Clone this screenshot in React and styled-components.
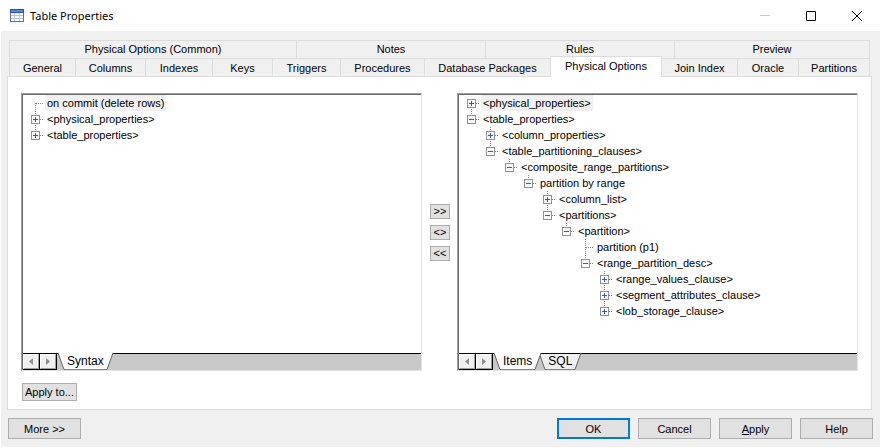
import React, { useState } from 'react';
import styled, { createGlobalStyle } from 'styled-components';

const theme = {
  face: '#f0f0f0',
  line: '#dcdcdc',
  button: '#e1e1e1',
  buttonBorder: '#adadad',
  accent: '#0078d7',
  font: '"Liberation Sans", Arial, sans-serif',
};

const topTabs = ['Physical Options (Common)', 'Notes', 'Rules', 'Preview'];

const bottomTabs = [
  'General', 'Columns', 'Indexes', 'Keys', 'Triggers', 'Procedures',
  'Database Packages', 'Physical Options', 'Join Index', 'Oracle', 'Partitions',
];

const syntaxTree = [
  { label: 'on commit (delete rows)' },
  { label: '<physical_properties>', open: false },
  { label: '<table_properties>', open: false },
];

const itemsTree = [
  { label: '<physical_properties>', open: false },
  { label: '<table_properties>', open: true, children: [
    { label: '<column_properties>', open: false },
    { label: '<table_partitioning_clauses>', open: true, children: [
      { label: '<composite_range_partitions>', open: true, children: [
        { label: 'partition by range', open: true, children: [
          { label: '<column_list>', open: false },
          { label: '<partitions>', open: true, children: [
            { label: '<partition>', open: true, children: [
              { label: 'partition (p1)' },
              { label: '<range_partition_desc>', open: true, children: [
                { label: '<range_values_clause>', open: false },
                { label: '<segment_attributes_clause>', open: false },
                { label: '<lob_storage_clause>', open: false },
              ] },
            ] },
          ] },
        ] },
      ] },
    ] },
  ] },
];

const TreeItem = ({ node, root, first, last }) => {
  const [open, setOpen] = useState(node.open);
  const expandable = node.open !== undefined;

  return (
    <li role='treeitem' aria-expanded={expandable ? open : undefined}>
      <Row>
        <Lines width='22' height='16' viewBox='0 0 22 16' aria-hidden='true'>
          {!(root && first) && <path d='M12.5 0V8' />}
          {!last && <path d='M12.5 8V16' />}
          <path d='M13 8.5H21' />
        </Lines>
        {expandable && (
          <Toggle
            type='button'
            aria-label={`Toggle ${node.label}`}
            onClick={() => setOpen(!open)}
          >
            <svg width='9' height='9' viewBox='0 0 9 9' aria-hidden='true'>
              <rect x='0.5' y='0.5' width='8' height='8' fill='#f8f8f8' stroke='#919191' />
              <path d='M2 4.5H7' stroke='#3c5aa0' />
              {!open && <path d='M4.5 2V7' stroke='#3c5aa0' />}
            </svg>
          </Toggle>
        )}
        <Label $selected={root && first}>{node.label}</Label>
      </Row>
      {open && node.children && (
        <Branch role='group'>
          {node.children.map((child, i) => (
            <TreeItem key={child.label} node={child} last={i === node.children.length - 1} />
          ))}
        </Branch>
      )}
    </li>
  );
};

const TreePane = ({ name, nodes, sheets }) => {
  const [active, setActive] = useState(sheets[0]);

  return (
    <Pane>
      <Tree role='tree' aria-label={name}>
        {nodes.map((node, i) => (
          <TreeItem key={node.label} node={node} root first={i === 0} last={i === nodes.length - 1} />
        ))}
      </Tree>
      <SheetBar>
        <Scrollers>
          <ScrollButton type='button' aria-label='Scroll left'>
            <svg width='4' height='7' viewBox='0 0 4 7'><path d='M4 0V7L0 3.5Z' fill='#909090' /></svg>
          </ScrollButton>
          <ScrollButton type='button' aria-label='Scroll right'>
            <svg width='4' height='7' viewBox='0 0 4 7'><path d='M0 0V7L4 3.5Z' fill='#909090' /></svg>
          </ScrollButton>
        </Scrollers>
        {sheets.map((sheet) => (
          <Sheet key={sheet} type='button' $active={sheet === active} onClick={() => setActive(sheet)}>
            <svg width='8' height='17' viewBox='0 0 8 17' aria-hidden='true'>
              <path className='fill' d='M1 0L7 17H8V0Z' />
              <path className='top' d='M1 0.5H8' />
              <path className='edge' d='M1 0L7 16.5H8' />
            </svg>
            <span>{sheet}</span>
            <svg width='8' height='17' viewBox='0 0 8 17' aria-hidden='true'>
              <path className='fill' d='M7 0L1 17H0V0Z' />
              <path className='top' d='M0 0.5H8' />
              <path className='edge' d='M7 0L1 16.5H0' />
            </svg>
          </Sheet>
        ))}
      </SheetBar>
    </Pane>
  );
};

const App = () => {
  const [tab, setTab] = useState('Physical Options');

  return (
    <Window>
      <GlobalStyle />
      <TitleBar>
        <svg width='14' height='13' viewBox='0 0 14 13' aria-hidden='true'>
          <rect width='14' height='13' fill='#5f6f98' />
          <rect width='14' height='4' fill='#2d50b8' />
          <rect x='1' y='1' width='12' height='2' fill='#5b83e6' />
          <rect x='1' y='4' width='12' height='8' fill='#b4c2dc' />
          <path d='M1 4h3v2h-3zM5 4h4v2h-4zM10 4h3v2h-3zM1 7h3v2h-3zM5 7h4v2h-4zM10 7h3v2h-3zM1 10h3v2h-3zM5 10h4v2h-4zM10 10h3v2h-3z' fill='#ffffff' />
        </svg>
        <h1>Table Properties</h1>
        <Caption type='button' aria-label='Minimize' disabled>
          <svg width='10' height='11' viewBox='0 0 10 11'><path d='M0 5.5H10' stroke='#cccccc' /></svg>
        </Caption>
        <Caption type='button' aria-label='Maximize'>
          <svg width='10' height='10' viewBox='0 0 10 10'><path d='M0.5 0.5H9.5V9.5H0.5Z' fill='none' stroke='#000' /></svg>
        </Caption>
        <Caption type='button' aria-label='Close'>
          <svg width='10' height='10' viewBox='0 0 10 10'><path d='M0 0L10 10M10 0L0 10' stroke='#000' /></svg>
        </Caption>
      </TitleBar>

      <Tabs role='tablist'>
        <TabRow $columns='287fr 189fr 189fr 195fr'>
          {topTabs.map((name) => (
            <Tab key={name} type='button' role='tab' $active={name === tab} onClick={() => setTab(name)}>
              {name}
            </Tab>
          ))}
        </TabRow>
        <TabRow $columns='66fr 70fr 67fr 60fr 68fr 84fr 126fr 111fr 76fr 61fr 71fr'>
          {bottomTabs.map((name) => (
            <Tab key={name} type='button' role='tab' $active={name === tab} onClick={() => setTab(name)}>
              {name}
            </Tab>
          ))}
        </TabRow>
      </Tabs>

      <Panel role='tabpanel'>
        <Columns>
          <TreePane name='Syntax' nodes={syntaxTree} sheets={['Syntax']} />
          <Movers>
            <MoveButton type='button'>&gt;&gt;</MoveButton>
            <MoveButton type='button'>&lt;&gt;</MoveButton>
            <MoveButton type='button'>&lt;&lt;</MoveButton>
          </Movers>
          <TreePane name='Items' nodes={itemsTree} sheets={['Items', 'SQL']} />
        </Columns>
        <ApplyTo type='button'>Apply to...</ApplyTo>
      </Panel>

      <Footer>
        <Button type='button'>More &gt;&gt;</Button>
        <Spacer />
        <Button type='button' $primary>OK</Button>
        <Button type='button'>Cancel</Button>
        <Button type='button'><u>A</u>pply</Button>
        <Button type='button'>Help</Button>
      </Footer>
    </Window>
  );
};

export default App;

// Style

const GlobalStyle = createGlobalStyle`
  * {
    box-sizing: border-box;
  }

  body {
    margin: 0;
    background: #ffffff;
  }

  button {
    padding: 0;
    border: none;
    border-radius: 0;
    background: transparent;
    color: #000000;
    font: inherit;
  }

  svg {
    display: block;
    flex: none;
  }
`;

const Window = styled.main`
  display: flex;
  flex-direction: column;
  min-height: 100vh;
  border: solid #ffffff;
  border-width: 0 1px 1px;
  background: ${theme.face};
  color: #000000;
  font: 11px/16px ${theme.font};
  white-space: nowrap;
`;

const TitleBar = styled.header`
  display: flex;
  align-items: center;
  height: 31px;
  padding-left: 9px;
  background: #ffffff;

  h1 {
    flex: 1;
    margin: 0 0 0 6px;
    font: 11px/16px "Noto Sans", "Open Sans", sans-serif;
  }
`;

const Caption = styled.button`
  display: flex;
  align-items: center;
  justify-content: center;
  width: 46px;
  height: 31px;
`;

const Tabs = styled.div`
  padding: 9px 10px 0 8px;
`;

const TabRow = styled.div`
  display: grid;
  grid-template-columns: ${(props) => props.$columns};
  height: 18px;
  border-right: 1px solid ${theme.line};
`;

const Tab = styled.button`
  min-width: 0;
  border: solid ${theme.line};
  border-width: 1px 0 0 1px;
  line-height: 17px;

  ${(props) => props.$active && `
    z-index: 1;
    height: 21px;
    margin: -2px -1px 0 0;
    padding-bottom: 2px;
    border-right-width: 1px;
    background: #ffffff;
  `}
`;

const Panel = styled.section`
  display: flex;
  flex: 1;
  flex-direction: column;
  align-items: flex-start;
  margin: 0 8px 0 6px;
  padding: 16px 13px 8px;
  border: 1px solid ${theme.line};
  background: #ffffff;
`;

const Columns = styled.div`
  display: flex;
  flex: 1;
  width: 100%;
`;

const Pane = styled.div`
  display: flex;
  flex: 1;
  flex-direction: column;
  border: 1px solid;
  border-color: #a0a0a0 #e3e3e3 #e3e3e3 #a0a0a0;
  box-shadow: inset 1px 1px #696969;
  padding: 1px 0 0 1px;
`;

const Tree = styled.ul`
  flex: 1;
  margin: 0;
  padding: 0;
  list-style: none;
`;

const Branch = styled.ul`
  margin: 0;
  padding: 0 0 0 19px;
  list-style: none;
`;

const Row = styled.div`
  position: relative;
  display: flex;
  height: 16px;
`;

const Lines = styled.svg`
  fill: none;
  stroke: #808080;
  stroke-dasharray: 1 1;
`;

/* sits over the crossing of the dotted lines */
const Toggle = styled.button`
  position: absolute;
  top: 4px;
  left: 8px;
  width: 9px;
  height: 9px;
`;

const Label = styled.span`
  padding: 0 2px;
  background: ${(props) => (props.$selected ? theme.face : 'transparent')};
`;

const SheetBar = styled.div`
  display: flex;
  height: 17px;
  border-top: 1px solid #000000;
  background: #c8c8c8;
`;

const Scrollers = styled.div`
  display: flex;
  gap: 1px;
  padding: 0 1px 1px 0;
  background: #000000;
`;

const ScrollButton = styled.button`
  display: flex;
  align-items: center;
  justify-content: center;
  width: 16px;
  height: 15px;
  border: 1px solid;
  border-color: #ffffff #a0a0a0 #a0a0a0 #ffffff;
  background: ${theme.face};
`;

const Sheet = styled.button`
  position: relative;
  z-index: ${(props) => (props.$active ? 1 : 0)};
  display: flex;
  height: 17px;
  margin-top: -1px;
  font-size: 12px;

  & + & {
    margin-left: -4px;
  }

  span {
    padding: 0 2px;
    border-bottom: 1px solid #808080;
    border-top: 1px solid ${(props) => (props.$active ? '#ffffff' : '#000000')};
    background: ${(props) => (props.$active ? '#ffffff' : theme.face)};
    line-height: 15px;
  }

  .fill {
    fill: ${(props) => (props.$active ? '#ffffff' : theme.face)};
  }

  .top {
    stroke: ${(props) => (props.$active ? 'none' : '#000000')};
  }

  .edge {
    fill: none;
    stroke: #606060;
  }
`;

const Movers = styled.div`
  display: flex;
  flex-direction: column;
  justify-content: center;
  gap: 6px;
  margin: 0 7px 0 8px;
`;

const Button = styled.button`
  width: 73px;
  height: 21px;
  border: ${(props) => (props.$primary ? `2px solid ${theme.accent}` : `1px solid ${theme.buttonBorder}`)};
  background: ${theme.button};
`;

const MoveButton = styled(Button)`
  width: 20px;
  height: 15px;
  line-height: 13px;
`;

const ApplyTo = styled(Button)`
  width: 55px;
  height: 18px;
  margin: 12px 0 0 1px;
  line-height: 16px;
`;

const Footer = styled.footer`
  display: flex;
  gap: 8px;
  padding: 8px 7px;
`;

const Spacer = styled.div`
  flex: 1;
`;
